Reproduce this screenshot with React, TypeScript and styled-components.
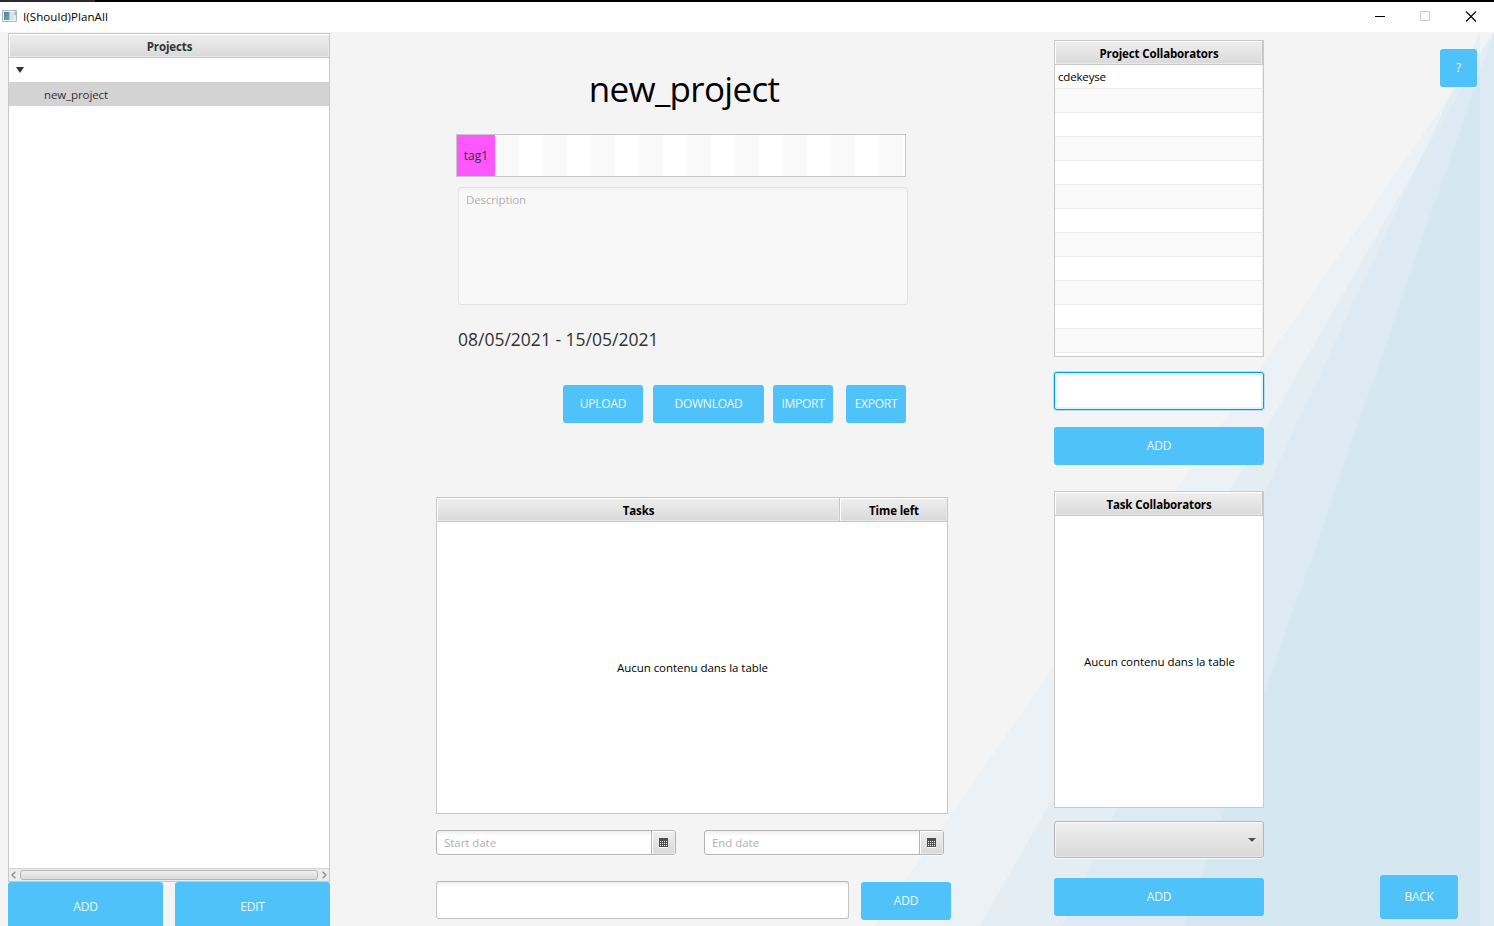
import React from 'react';
import styled, { createGlobalStyle, css } from 'styled-components';

const GlobalStyle = createGlobalStyle`
  *, *::before, *::after { box-sizing: border-box; }
  body {
    margin: 0;
    overflow: hidden;
    font-family: "Open Sans", "Noto Sans", sans-serif;
    font-size: 11.5px;
    line-height: 16px;
    color: #000;
  }
`;

const headerGradient = css`
  background: linear-gradient(#efefef, #d9d9d9);
  box-shadow: inset 1px 1px 0 #fff, inset -1px -1px 0 #e8e8e8;
`;

const Window = styled.div`
  display: flex;
  flex-direction: column;
  width: 1494px;
  height: 926px;
  background: #f4f4f4;
  overflow: hidden;
`;

const TopEdge = styled.div`
  height: 2px;
  flex: none;
  background: linear-gradient(90deg, #2b2830 95px, #000 95px);
`;

const TitleBar = styled.header`
  display: flex;
  align-items: center;
  height: 30px;
  flex: none;
  padding: 0 17px 2px 2px;
  background: #fff;
`;

const AppTitle = styled.span`
  flex: 1;
  padding: 2px 0 0 5px;
  letter-spacing: 0.08px;
`;

const WindowControls = styled.div`
  display: flex;
  gap: 34px;
  align-items: center;
`;

const Body = styled.main`
  position: relative;
  display: flex;
  height: 894px;
  isolation: isolate;
`;

const Rays = styled.svg`
  position: absolute;
  inset: 0;
  z-index: -1;
`;

const Column = styled.section<{ $width: number; $left: number; $top: number }>`
  display: flex;
  flex-direction: column;
  flex: none;
  width: ${(p) => p.$width}px;
  margin-left: ${(p) => p.$left}px;
  padding-top: ${(p) => p.$top}px;
`;

const Row = styled.div<{ $gap?: number; $top?: number; $left?: number }>`
  display: flex;
  flex: none;
  gap: ${(p) => p.$gap ?? 0}px;
  margin-top: ${(p) => p.$top ?? 0}px;
  margin-left: ${(p) => p.$left ?? 0}px;
`;

const Button = styled.button<{ $width: number; $height?: number; $top?: number; $left?: number }>`
  display: flex;
  align-items: center;
  justify-content: center;
  flex: none;
  width: ${(p) => p.$width}px;
  height: ${(p) => p.$height ?? 38}px;
  margin: ${(p) => p.$top ?? 0}px 0 0 ${(p) => p.$left ?? 0}px;
  padding: 0 0 1px;
  border: 0;
  border-radius: 3px;
  background: #4fc3f9;
  color: #e9f8ff;
  font: 12px/16px "Open Sans", sans-serif;
  letter-spacing: -0.25px;
`;

const Table = styled.div<{ $height: number; $top?: number; $width?: number }>`
  display: flex;
  flex-direction: column;
  flex: none;
  width: ${(p) => (p.$width ? `${p.$width}px` : 'auto')};
  height: ${(p) => p.$height}px;
  margin-top: ${(p) => p.$top ?? 0}px;
  border: 1px solid #c8c8c8;
  background: #fff;
  overflow: hidden;
`;

const TableHead = styled.div<{ $edge?: boolean }>`
  display: flex;
  flex: none;
  height: 24px;
  border-bottom: 1px solid #c8c8c8;
  border-right: ${(p) => (p.$edge ? '1px solid #c8c8c8' : '0')};
`;

const HeadCell = styled.div<{ $width?: number; $color?: string }>`
  ${headerGradient}
  display: flex;
  align-items: center;
  justify-content: center;
  flex: ${(p) => (p.$width ? 'none' : 1)};
  width: ${(p) => (p.$width ? `${p.$width}px` : 'auto')};
  padding: 3px 0 0 1px;
  font-weight: 700;
  color: ${(p) => p.$color ?? '#000'};
  letter-spacing: -0.13px;

  & + & { border-left: 1px solid #c8c8c8; }
`;

const Placeholder = styled.div`
  display: flex;
  flex: 1;
  align-items: center;
  justify-content: center;
  padding-left: 1px;
  letter-spacing: -0.04px;
`;

const TreeRow = styled.div<{ $selected?: boolean }>`
  display: flex;
  align-items: center;
  flex: none;
  height: 24px;
  padding: ${(p) => (p.$selected ? '1px 0 0 35px' : '0 0 0 7px')};
  background: ${(p) => (p.$selected ? '#d3d3d3' : '#fff')};
  color: #323232;
  letter-spacing: -0.1px;
`;

const ScrollBar = styled.div`
  display: flex;
  align-items: center;
  justify-content: space-between;
  flex: none;
  height: 13px;
  margin-top: auto;
  padding: 0 2px;
  border-top: 1px solid #d4d4d4;
  background: #ececec;
`;

const ScrollThumb = styled.div`
  width: 298px;
  height: 10px;
  border: 1px solid #b4b4b4;
  border-radius: 3px;
  background: linear-gradient(#f0f0f0, #dadada);
`;

const ListRow = styled.div`
  flex: none;
  height: 24px;
  padding: 4px 3px;
  border-bottom: 1px solid #ededed;
  border-right: 1px solid #ededed;
  letter-spacing: -0.17px;
  &:nth-child(odd) { background: #f9f9f9; }
`;

const Title = styled.h1`
  margin: 0 0 0 -19px;
  height: 50px;
  font-size: 35px;
  line-height: 50px;
  font-weight: 400;
  text-align: center;
  letter-spacing: -0.68px;
`;

const TagStrip = styled.div`
  display: flex;
  flex: none;
  width: 450px;
  height: 43px;
  margin: 20px 0 0 20px;
  border: 1px solid #c8c8c8;
  background: repeating-linear-gradient(90deg, #f9f9f9 0 24px, #fff 24px 48px) 38px 0 / 408px 100% no-repeat #fff;
`;

const Tag = styled.span`
  display: flex;
  align-items: center;
  justify-content: center;
  width: 38px;
  padding-top: 1px;
  background: #ff57ff;
  color: #323232;
  font-size: 12px;
`;

const Description = styled.div`
  flex: none;
  width: 450px;
  height: 118px;
  margin: 10px 0 0 22px;
  padding: 4px 7px;
  border: 1px solid #e1e1e1;
  border-radius: 3px;
  background: linear-gradient(#f1f1f1, #f8f8f8 4px);
  color: #b0b0b0;
  letter-spacing: -0.13px;
`;

const DateRange = styled.div`
  height: 26px;
  margin: 21px 0 1px 22px;
  font-size: 17.5px;
  line-height: 26px;
  color: #323232;
  letter-spacing: 0;
`;

const TextField = styled.div<{ $width: number; $focused?: boolean; $top?: number }>`
  flex: none;
  width: ${(p) => p.$width}px;
  height: 38px;
  margin-top: ${(p) => p.$top ?? 0}px;
  border-radius: 3px;
  border: 1px solid ${(p) => (p.$focused ? '#039ed3' : '#c4c4c4')};
  ${(p) =>
    p.$focused
      ? css`
          background: #fff;
          box-shadow: 0 0 0 1px #b4dfee, inset 0 0 0 2px #e5f3f8, inset 0 5px 2px -2px #f4f4f4;
        `
      : css`
          border-top-color: #b7b7b7;
          background: linear-gradient(#eee, #fff 5px);
        `}
`;

const DatePicker = styled.div`
  display: flex;
  width: 240px;
  height: 25px;
  border: 1px solid #b5b5b5;
  border-radius: 3px;
  background: linear-gradient(#eee, #fff 5px);
  box-shadow: 0 1px 0 #fafafa;
  overflow: hidden;
`;

const DateInput = styled.div`
  flex: 1;
  padding: 4px 7px;
  color: #b0b0b0;
  letter-spacing: -0.05px;
`;

const DateButton = styled.div`
  ${headerGradient}
  display: flex;
  align-items: center;
  justify-content: center;
  width: 24px;
  border-left: 1px solid #b5b5b5;
`;

const ComboBox = styled.div`
  display: flex;
  align-items: center;
  justify-content: flex-end;
  flex: none;
  height: 37px;
  margin-top: 13px;
  padding: 2px 7px 0 0;
  border: 1px solid #b5b5b5;
  border-radius: 3px;
  background: linear-gradient(#efefef, #d9d9d9);
  box-shadow: 0 1px 0 #fbfbfb, inset 0 1px 0 #fff, inset 1px 0 0 #f4f4f4, inset -1px -1px 0 #e6e6e6;
`;

const CalendarIcon = () => (
  <svg width="9" height="10" viewBox="0 0 9 10" shapeRendering="crispEdges">
    <path fill="#fff" d="M0 9h9v1H0z" />
    <path fill="#4d4d4d" d="M0 0h9v9H0z" />
    <path
      fill="#fff"
      d="M1 3h1v1H1zM3 3h1v1H3zM5 3h1v1H5zM7 3h1v1H7zM1 5h1v1H1zM3 5h1v1H3zM5 5h1v1H5zM7 5h1v1H7zM1 7h1v1H1zM3 7h1v1H3zM5 7h1v1H5zM7 7h1v1H7z"
    />
  </svg>
);

const DateField = ({ label }: { label: string }) => (
  <DatePicker>
    <DateInput>{label}</DateInput>
    <DateButton>
      <CalendarIcon />
    </DateButton>
  </DatePicker>
);

const ScrollArrow = ({ flip }: { flip?: boolean }) => (
  <svg width="5" height="8" viewBox="0 0 5 8" fill="none" stroke="#8c8c8c" strokeWidth="1.3">
    <path d={flip ? 'M.6.8 4 4 .6 7.2' : 'M4.4.8 1 4l3.4 3.2'} />
  </svg>
);

const collaborators = ['cdekeyse', ...Array<string>(12).fill('')];

export default function App() {
  return (
    <Window>
      <GlobalStyle />
      <TopEdge />
      <TitleBar>
        <svg width="16" height="14" viewBox="0 0 16 14">
          <defs>
            <linearGradient id="pane" x1="0" y1="0" x2="1" y2="1">
              <stop offset="0" stopColor="#4f7fb8" />
              <stop offset="1" stopColor="#5fb487" />
            </linearGradient>
          </defs>
          <path fill="#f0f2f5" stroke="#b0b6c2" d="M.5 1.5h14v11H.5z" />
          <path fill="url(#pane)" d="M2 3h5.500v8H2z" />
          <path fill="#dde0e4" d="M8 3h4v8H8z" />
          <path fill="#8fbfb4" d="M12.500 2.500h1.500v3.500h-1.500z" />
          <path fill="#e4e7ea" d="M12.500 6h1.500v5h-1.500z" />
        </svg>
        <AppTitle>I(Should)PlanAll</AppTitle>
        <WindowControls>
          <svg width="11" height="11" shapeRendering="crispEdges">
            <path stroke="#000" d="M0 5.5h10" />
          </svg>
          <svg width="11" height="11" shapeRendering="crispEdges">
            <path fill="none" stroke="#ccc" d="M.5.5h9v9h-9z" />
          </svg>
          <svg width="12" height="11">
            <path stroke="#000" strokeWidth="1.1" d="m1 .5 10 10M11 .5l-10 10" />
          </svg>
        </WindowControls>
      </TitleBar>

      <Body>
        <Rays width="1494" height="894" viewBox="0 0 1494 894">
          <path fill="#d0e8f2" fillOpacity=".25" d="M1494 0v894H874z" />
          <path fill="#cddff5" fillOpacity=".2" d="M1494 0v894H979.5z" />
          <path fill="#bde3f0" fillOpacity=".2" d="M1480 0v894h-418z" />
          <path fill="#b8dff0" fillOpacity=".2" d="M1494 0v894h-310z" />
        </Rays>

        <Column $width={322} $left={8} $top={1}>
          <Table $height={849}>
            <TableHead>
              <HeadCell $color="#323232">Projects</HeadCell>
            </TableHead>
            <TreeRow>
              <svg width="8" height="6">
                <path fill="#323232" d="M0 0h8L4 6z" />
              </svg>
            </TreeRow>
            <TreeRow $selected>new_project</TreeRow>
            <ScrollBar>
              <ScrollArrow />
              <ScrollThumb />
              <ScrollArrow flip />
            </ScrollBar>
          </Table>
          <Row $gap={12}>
            <Button $width={155} $height={50}>ADD</Button>
            <Button $width={155} $height={50}>EDIT</Button>
          </Row>
        </Column>

        <Column $width={515} $left={106} $top={32}>
          <Title>new_project</Title>
          <TagStrip>
            <Tag>tag1</Tag>
          </TagStrip>
          <Description>Description</Description>
          <DateRange>08/05/2021 - 15/05/2021</DateRange>
          <Row $top={32} $left={127}>
            <Button $width={80}>UPLOAD</Button>
            <Button $width={111} $left={10}>DOWNLOAD</Button>
            <Button $width={60} $left={9}>IMPORT</Button>
            <Button $width={60} $left={13}>EXPORT</Button>
          </Row>
          <Table $width={512} $height={317} $top={74}>
            <TableHead>
              <HeadCell>Tasks</HeadCell>
              <HeadCell $width={108}>Time left</HeadCell>
            </TableHead>
            <Placeholder>Aucun contenu dans la table</Placeholder>
          </Table>
          <Row $top={16} $gap={28}>
            <DateField label="Start date" />
            <DateField label="End date" />
          </Row>
          <Row $top={26} $gap={12}>
            <TextField $width={413} />
            <Button $width={90} $top={1}>ADD</Button>
          </Row>
        </Column>

        <Column $width={210} $left={103} $top={8}>
          <Table $height={317}>
            <TableHead $edge>
              <HeadCell>Project Collaborators</HeadCell>
            </TableHead>
            {collaborators.map((name, i) => (
              <ListRow key={i}>{name}</ListRow>
            ))}
          </Table>
          <TextField $width={210} $top={15} $focused />
          <Button $width={210} $top={17}>ADD</Button>
          <Table $height={317} $top={26}>
            <TableHead $edge>
              <HeadCell>Task Collaborators</HeadCell>
            </TableHead>
            <Placeholder>Aucun contenu dans la table</Placeholder>
          </Table>
          <ComboBox>
            <svg width="8" height="5">
              <path fill="#fff" d="M0 1h8L4 5z" />
              <path fill="#4d4d4d" d="M0 0h8L4 4z" />
            </svg>
          </ComboBox>
          <Button $width={210} $top={20}>ADD</Button>
        </Column>

        <Column $width={97} $left={116} $top={17}>
          <Button $width={37} $left={60}>?</Button>
          <Button $width={78} $height={44} $top={788}>BACK</Button>
        </Column>
      </Body>
    </Window>
  );
}
